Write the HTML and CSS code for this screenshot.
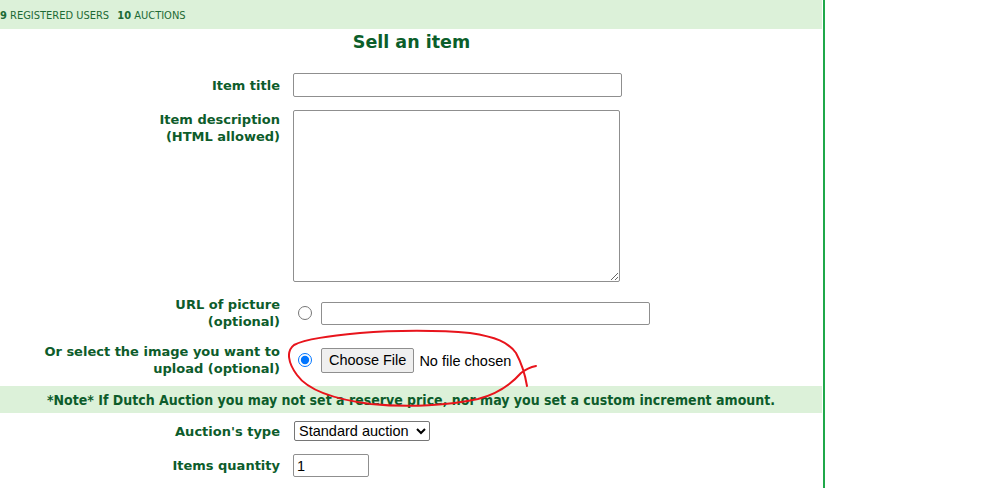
FILE: index.html
```html
<!DOCTYPE html>
<html>
<head>
<meta charset="utf-8">
<link rel="stylesheet" href="styles.css">
</head>
<body>
<div class="page">
  <div class="topbar"><b>9</b> REGISTERED USERS <span class="sep"></span><b>10</b> AUCTIONS</div>
  <h1 class="title">Sell an item</h1>
  <div class="form">
    <div class="row">
      <div class="label">Item title</div>
      <div class="field"><input class="text wide tall" type="text"></div>
    </div>
    <div class="row top">
      <div class="label">Item description<br>(HTML allowed)</div>
      <div class="field"><textarea class="desc"></textarea></div>
    </div>
    <div class="row after-desc">
      <div class="label">URL of picture<br>(optional)</div>
      <div class="field"><input class="radio" type="radio" name="pic"><input class="text wide" type="text"></div>
    </div>
    <div class="row">
      <div class="label">Or select the image you want to<br>upload (optional)</div>
      <div class="field"><input class="radio" type="radio" name="pic" checked><input class="file" type="file"></div>
    </div>
  </div>
  <div class="note">*Note* If Dutch Auction you may not set a reserve price, nor may you set a custom increment amount.</div>
  <div class="form">
    <div class="row">
      <div class="label">Auction's type</div>
      <div class="field"><select class="select"><option>Standard auction</option></select></div>
    </div>
    <div class="row">
      <div class="label">Items quantity</div>
      <div class="field"><input class="text qty" type="text" value="1"></div>
    </div>
  </div>
  <svg class="scribble" width="260" height="90" viewBox="280 325 260 90">
    <path d="M527 386 C525 374 522 364 516 353 C508 342 496 337 470 333 C440 330 395 330 360 333 C330 336 305 339 294 345 C286 351 288 363 297 375 C307 389 331 399 371 404 C410 408 450 405 478 399 C500 393 514 381 521 373 C526 369 531 367 536 366" fill="none" stroke="#e8141c" stroke-width="2" stroke-linecap="round"/>
  </svg>
</div>
</body>
</html>
```
FILE: styles.css
```css
html, body {
  margin: 0;
  padding: 0;
  background: #fff;
}
.page {
  position: relative;
  width: 823px;
  min-height: 488px;
  border-right: 2px solid #1fa84a;
  font-family: "DejaVu Sans", Verdana, sans-serif;
  color: #0d5c2b;
}
.topbar {
  height: 29px;
  background: #dcf1d9;
  font-family: "DejaVu Sans Condensed", "DejaVu Sans", sans-serif;
  font-size: 11px;
  line-height: 32px;
  color: #1d6a35;
  white-space: nowrap;
  margin-right: 1px;
}
.topbar .sep {
  display: inline-block;
  width: 5px;
}
.title {
  margin: 0;
  padding-top: 1px;
  height: 43px;
  font-size: 17.5px;
  line-height: 24px;
  text-align: center;
  font-weight: bold;
  color: #0b5e2a;
}
.form {
  display: flex;
  flex-direction: column;
  gap: 13px;
}
.row {
  display: flex;
  align-items: center;
}
.row.top {
  align-items: flex-start;
}
.row.after-desc {
  margin-top: 1px;
}
.label {
  width: 280px;
  flex: none;
  text-align: right;
  font-weight: bold;
  font-size: 13px;
  line-height: 17px;
}
.row.top .label {
  padding-top: 1px;
}
.field {
  margin-left: 13px;
  display: flex;
  align-items: center;
}
.text {
  box-sizing: border-box;
  height: 23px;
  border: 1px solid #8f8f8f;
  border-radius: 2px;
  font-family: "Liberation Sans", Arial, sans-serif;
  font-size: 14.5px;
  color: #000;
  padding: 1px 3px;
  margin: 0;
}
.wide {
  width: 329px;
}
.tall {
  height: 24px;
}
.desc {
  display: block;
  box-sizing: border-box;
  width: 327px;
  height: 172px;
  border: 1px solid #8f8f8f;
  border-radius: 2px;
  margin: 0;
  resize: both;
}
.radio {
  width: 14px;
  height: 14px;
  margin: 0 9px 0 5px;
}
.file {
  font-family: "Liberation Sans", Arial, sans-serif;
  font-size: 14.5px;
  color: #000;
  margin: 0;
}
.file::file-selector-button {
  font-family: "Liberation Sans", Arial, sans-serif;
  font-size: 14.5px;
  height: 25px;
  padding: 0 7px;
  margin-right: 5px;
  border: 1px solid #8f8f8f;
  border-radius: 2px;
  background: #efefef;
  color: #000;
}
.select {
  box-sizing: border-box;
  width: 136px;
  height: 20px;
  margin: 0 0 0 1px;
  font-family: "Liberation Sans", Arial, sans-serif;
  font-size: 14.5px;
  color: #000;
  border: 1px solid #767676;
  border-radius: 2px;
  background: #fff;
  padding: 0;
}
.qty {
  width: 76px;
}
.note {
  margin: 9px 1px 8px 0;
  height: 27px;
  background: #dcf1d9;
  text-align: center;
  font-family: "DejaVu Sans Condensed", "DejaVu Sans", sans-serif;
  font-weight: bold;
  font-size: 14px;
  line-height: 28px;
  color: #0d5c2b;
  white-space: nowrap;
}
.scribble {
  position: absolute;
  left: 280px;
  top: 325px;
  pointer-events: none;
}
```
